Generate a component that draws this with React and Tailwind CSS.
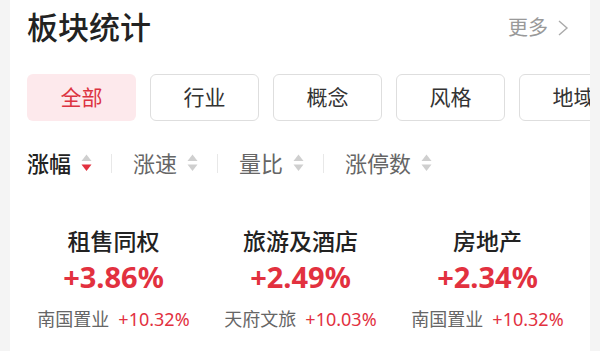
import React from 'react';

const tabs = ['全部', '行业', '概念', '风格', '地域'];

const sorts = [
  { label: '涨幅', active: true },
  { label: '涨速' },
  { label: '量比' },
  { label: '涨停数' },
];

const sectors = [
  { name: '租售同权', pct: '+3.86%', stock: '南国置业', stockPct: '+10.32%' },
  { name: '旅游及酒店', pct: '+2.49%', stock: '天府文旅', stockPct: '+10.03%' },
  { name: '房地产', pct: '+2.34%', stock: '南国置业', stockPct: '+10.32%' },
];

const SortArrows = ({ active }) => (
  <svg width="11" height="20" viewBox="0 0 11 20" className="shrink-0">
    <polygon points="0.5,8 5.5,1.5 10.5,8" fill="#cfcfcf" />
    <polygon points="0.5,11.5 10.5,11.5 5.5,18" fill={active ? '#e2313f' : '#cfcfcf'} />
  </svg>
);

const App = () => {
  return (
    <div className="w-[600px] h-[351px] bg-[#f4f4f4] px-[10px] overflow-hidden font-['Noto_Sans','Noto_Sans_CJK_SC',sans-serif]">
      <div className="bg-white h-full overflow-hidden">
        {/* header */}
        <div className="flex items-center justify-between h-[55px] pl-[17px] pr-[21px]">
          <h2 className="text-[31px] leading-none font-medium text-[#222]">板块统计</h2>
          <div className="flex items-center gap-[9px] text-[20px] text-[#999]">
            <span>更多</span>
            <svg width="12" height="18" viewBox="0 0 12 18">
              <polyline points="2,2 10,9 2,16" fill="none" stroke="#aaa" strokeWidth="1.4" />
            </svg>
          </div>
        </div>

        {/* tabs */}
        <div className="flex gap-[14px] pl-[17px] mt-[19px]">
          {tabs.map((t, i) => (
            <div
              key={t}
              className={
                i === 0
                  ? 'shrink-0 w-[109px] h-[47px] rounded-[6px] bg-[#fde9ec] text-[#dc3341] flex items-center justify-center text-[21px]'
                  : 'shrink-0 w-[109px] h-[47px] rounded-[6px] border border-[#dedede] text-[#333] flex items-center justify-center text-[21px]'
              }
            >
              {t}
            </div>
          ))}
        </div>

        {/* sort row */}
        <div className="flex items-center h-[40px] mt-[22px] pl-[17px]">
          {sorts.map((s, i) => (
            <React.Fragment key={s.label}>
              {i > 0 && <div className="w-px h-[19px] bg-[#e8e8e8] ml-[19px] mr-[21px]" />}
              <div className="flex items-center gap-[10px]">
                <span className={s.active ? 'text-[22px] text-[#222] font-medium' : 'text-[22px] text-[#666]'}>
                  {s.label}
                </span>
                <SortArrows active={s.active} />
              </div>
            </React.Fragment>
          ))}
        </div>

        {/* sector cards */}
        <div className="grid grid-cols-[repeat(3,187px)] pl-[10px] mt-[42px]">
          {sectors.map(s => (
            <div key={s.name} className="flex flex-col items-center">
              <div className="text-[23px] leading-[32px] font-medium text-[#222]">{s.name}</div>
              <div className="text-[29px] leading-[36px] font-bold text-[#e2313f] mt-[2px]">{s.pct}</div>
              <div className="flex items-center gap-[9px] mt-[11px] leading-[26px]">
                <span className="text-[18px] text-[#666]">{s.stock}</span>
                <span className="text-[18px] text-[#e2313f]">{s.stockPct}</span>
              </div>
            </div>
          ))}
        </div>
      </div>
    </div>
  );
};

export default App;
